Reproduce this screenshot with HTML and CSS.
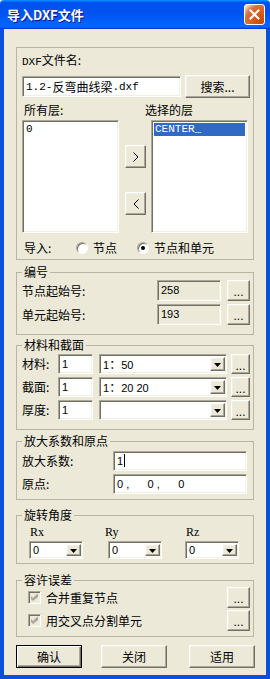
FILE: index.html
```html
<!DOCTYPE html>
<html lang="zh-CN">
<head>
    <meta charset="UTF-8">
    <meta name="viewport" content="width=device-width, initial-scale=1.0">
    <title>导入DXF文件</title>
    <link rel="stylesheet" href="styles.css">
</head>
<body>
    <div class="window">
        <div class="titlebar">
            <span class="title">导入DXF文件</span>
            <span class="close-btn">
                <svg width="11" height="11" viewBox="0 0 11 11"><path d="M1.5 1.5 L9.5 9.5 M9.5 1.5 L1.5 9.5" stroke="#fff" stroke-width="2" stroke-linecap="square"/></svg>
            </span>
        </div>

        <div class="client">
            <!-- file + layers -->
            <div class="file-box">
                <div class="label"><span class="mono">DXF</span>文件名:</div>
                <div class="file-row">
                    <div class="field file-input"><span class="mono">1.2-</span>反弯曲线梁<span class="mono">.dxf</span></div>
                    <button class="btn search-btn">搜索...</button>
                </div>
                <div class="layer-labels">
                    <span class="all-label">所有层:</span>
                    <span>选择的层</span>
                </div>
                <div class="layers">
                    <div class="field listbox"><div class="item mono">0</div></div>
                    <div class="move-btns">
                        <button class="btn arrow-btn"><svg width="6" height="10" viewBox="0 0 6 10"><path d="M0.5 0.5 L5 5 L0.5 9.5" fill="none" stroke="#000"/></svg></button>
                        <button class="btn arrow-btn"><svg width="6" height="10" viewBox="0 0 6 10"><path d="M5.5 0.5 L1 5 L5.5 9.5" fill="none" stroke="#000"/></svg></button>
                    </div>
                    <div class="field listbox"><div class="item selected mono">CENTER_</div></div>
                </div>
                <div class="import-row">
                    <span class="import-label">导入:</span>
                    <span class="radio"></span><span class="radio-text">节点</span>
                    <span class="radio checked second"></span><span class="radio-text">节点和单元</span>
                </div>
            </div>

            <fieldset class="group numbering">
                <legend>编号</legend>
                <div class="row">
                    <span class="row-label">节点起始号:</span>
                    <div class="field num-input num">258</div>
                    <button class="btn dots-btn">...</button>
                </div>
                <div class="row">
                    <span class="row-label">单元起始号:</span>
                    <div class="field num-input num">193</div>
                    <button class="btn dots-btn">...</button>
                </div>
            </fieldset>

            <fieldset class="group material">
                <legend>材料和截面</legend>
                <div class="row">
                    <span class="short-label">材料:</span>
                    <div class="field small-input num">1</div>
                    <div class="field combo">
                        <span class="combo-text"><span class="num">1</span>：<span class="num">50</span></span>
                        <span class="btn combo-arrow"><svg width="7" height="4" viewBox="0 0 7 4"><path d="M0 0 H7 L3.5 4 Z"/></svg></span>
                    </div>
                    <button class="btn dots-btn">...</button>
                </div>
                <div class="row">
                    <span class="short-label">截面:</span>
                    <div class="field small-input num">1</div>
                    <div class="field combo">
                        <span class="combo-text"><span class="num">1</span>：<span class="num">20 20</span></span>
                        <span class="btn combo-arrow"><svg width="7" height="4" viewBox="0 0 7 4"><path d="M0 0 H7 L3.5 4 Z"/></svg></span>
                    </div>
                    <button class="btn dots-btn">...</button>
                </div>
                <div class="row">
                    <span class="short-label">厚度:</span>
                    <div class="field small-input num">1</div>
                    <div class="field combo">
                        <span class="combo-text"></span>
                        <span class="btn combo-arrow"><svg width="7" height="4" viewBox="0 0 7 4"><path d="M0 0 H7 L3.5 4 Z"/></svg></span>
                    </div>
                    <button class="btn dots-btn">...</button>
                </div>
            </fieldset>

            <fieldset class="group scale">
                <legend>放大系数和原点</legend>
                <div class="row">
                    <span class="row-label">放大系数:</span>
                    <div class="field wide-input num">1<span class="caret"></span></div>
                </div>
                <div class="row">
                    <span class="row-label">原点:</span>
                    <div class="field wide-input num origin">0 ,      0 ,      0</div>
                </div>
            </fieldset>

            <fieldset class="group rotation">
                <legend>旋转角度</legend>
                <div class="rot-row">
                    <div class="rot-col">
                        <span class="rot-label">Rx</span>
                        <div class="field combo rot-combo">
                            <span class="combo-text num">0</span>
                            <span class="btn combo-arrow"><svg width="7" height="4" viewBox="0 0 7 4"><path d="M0 0 H7 L3.5 4 Z"/></svg></span>
                        </div>
                    </div>
                    <div class="rot-col">
                        <span class="rot-label ry">Ry</span>
                        <div class="field combo rot-combo">
                            <span class="combo-text num">0</span>
                            <span class="btn combo-arrow"><svg width="7" height="4" viewBox="0 0 7 4"><path d="M0 0 H7 L3.5 4 Z"/></svg></span>
                        </div>
                    </div>
                    <div class="rot-col">
                        <span class="rot-label">Rz</span>
                        <div class="field combo rot-combo">
                            <span class="combo-text num">0</span>
                            <span class="btn combo-arrow"><svg width="7" height="4" viewBox="0 0 7 4"><path d="M0 0 H7 L3.5 4 Z"/></svg></span>
                        </div>
                    </div>
                </div>
            </fieldset>

            <fieldset class="group tolerance">
                <legend>容许误差</legend>
                <div class="row">
                    <span class="field check"><svg width="7" height="7" viewBox="0 0 7 7"><path d="M0 2 L2 4 L6 0 L7 0 L7 3 L2 7 L0 5 Z" fill="#aca899"/></svg></span>
                    <span class="check-text">合并重复节点</span>
                    <button class="btn dots-btn">...</button>
                </div>
                <div class="row">
                    <span class="field check"><svg width="7" height="7" viewBox="0 0 7 7"><path d="M0 2 L2 4 L6 0 L7 0 L7 3 L2 7 L0 5 Z" fill="#aca899"/></svg></span>
                    <span class="check-text">用交叉点分割单元</span>
                    <button class="btn dots-btn">...</button>
                </div>
            </fieldset>

            <div class="dialog-btns">
                <button class="btn dialog-btn default">确认</button>
                <button class="btn dialog-btn close">关闭</button>
                <button class="btn dialog-btn apply">适用</button>
            </div>
        </div>
    </div>
</body>
</html>
```

FILE: styles.css
```css
* {
    box-sizing: border-box;
}
body {
    margin: 0;
    background: #fff;
    font-family: "Noto Sans CJK SC", "Liberation Sans", sans-serif;
    font-size: 12px;
    line-height: 14px;
    color: #000;
}
.window {
    width: 270px;
    height: 679px;
    display: flex;
    flex-direction: column;
}
.titlebar {
    flex: none;
    height: 29px;
    display: flex;
    align-items: center;
    justify-content: space-between;
    padding: 0 5px 0 7px;
    border-radius: 4px 4px 0 0;
    background: linear-gradient(180deg, #0997ff, #0053ee 8%, #0050ee 40%, #0066ff 88%, #0066ff 93%, #005bff 95%, #003dd7 96%, #003dd7);
}
.title {
    color: #fff;
    font-weight: bold;
    font-size: 13px;
    line-height: 16px;
    text-shadow: 1px 1px #0f1089;
}
.close-btn {
    width: 21px;
    height: 21px;
    border: 1px solid #fff;
    border-radius: 3px;
    display: flex;
    align-items: center;
    justify-content: center;
    background: radial-gradient(circle at 90% 90%, #cc4600 0, #dc6527 55%, #cd7546 70%, #ffccb2 90%, #fff 100%);
}
.client {
    flex: 1;
    display: flex;
    flex-direction: column;
    align-items: flex-start;
    background: #ece9d8;
    border: 4px solid #0b4fdd;
    border-top: 0;
    padding: 0 12px;
}

/* common controls */
.mono {
    font-family: "Liberation Mono", monospace;
    font-size: 11px;
}
.num {
    font-family: "Liberation Sans", Arial, sans-serif;
    font-size: 11px;
}
.field {
    background: #fff;
    border: 1px solid;
    border-color: #aca899 #fff #fff #aca899;
    box-shadow: inset 1px 1px #716f64, inset -1px -1px #f1efe2;
}
.btn {
    font: inherit;
    color: #000;
    padding: 0;
    flex: none;
    background: #ece9d8;
    border: 1px solid;
    border-color: #fff #716f64 #716f64 #fff;
    box-shadow: inset -1px -1px #aca899, inset 1px 1px #f1efe2;
    display: flex;
    align-items: center;
    justify-content: center;
}
.dots-btn {
    font-family: "Liberation Sans", Arial, sans-serif;
    padding-top: 3px;
}
.row {
    display: flex;
    align-items: center;
    height: 21px;
}
.row + .row {
    margin-top: 3px;
}
.row-label {
    flex: 1;
}

/* file group */
.file-box {
    width: 238px;
    margin-top: 18px;
    border: 1px solid #b8b5a5;
    padding: 5px 3px 4px 5px;
}
.file-row {
    display: flex;
    align-items: center;
    height: 23px;
    margin-top: 6px;
}
.file-input {
    width: 159px;
    height: 21px;
    padding-left: 3px;
    display: flex;
    align-items: center;
    white-space: nowrap;
}
.search-btn {
    width: 65px;
    height: 23px;
    margin-left: 4px;
}
.layer-labels {
    display: flex;
    margin-top: 5px;
}
.all-label {
    width: 123px;
    padding-left: 2px;
}
.layers {
    display: flex;
    height: 113px;
    margin-top: 3px;
}
.listbox {
    width: 97px;
    height: 113px;
    padding: 2px;
}
.item {
    height: 13px;
    line-height: 13px;
    padding-left: 1px;
}
.item.selected {
    background: #316ac5;
    color: #fff;
}
.move-btns {
    width: 21px;
    margin: 0 5px 0 6px;
    padding-top: 25px;
    display: flex;
    flex-direction: column;
    gap: 24px;
}
.arrow-btn {
    width: 21px;
    height: 23px;
}
.import-row {
    display: flex;
    align-items: center;
    margin-top: 8px;
}
.import-label {
    width: 54px;
    padding-left: 2px;
}
.radio {
    width: 12px;
    height: 12px;
    border-radius: 50%;
    border: 1px solid;
    border-color: #aca899 #fff #fff #aca899;
    box-shadow: inset 1px 1px #716f64;
    background: #fff;
    display: flex;
    align-items: center;
    justify-content: center;
}
.radio.checked::after {
    content: "";
    width: 4px;
    height: 4px;
    border-radius: 50%;
    background: #000;
}
.radio.second {
    margin-left: 20px;
}
.radio-text {
    margin-left: 5px;
}

/* group boxes */
.group {
    width: 238px;
    margin: 0;
    padding: 0 3px 0 5px;
    border: 1px solid #b8b5a5;
    min-inline-size: 0;
}
.group legend {
    padding: 0 2px;
    line-height: 14px;
}
.numbering {
    margin-top: 5px;
    padding-top: 1px;
    padding-bottom: 9px;
}
.num-input {
    width: 64px;
    height: 21px;
    background: #ece9d8;
    padding: 2px 0 0 3px;
}
.numbering .dots-btn {
    width: 23px;
    height: 21px;
    margin-left: 6px;
}
.material {
    margin-top: 3px;
    padding-top: 2px;
    padding-bottom: 9px;
}
.material .row,
.scale .row {
    height: 20px;
}
.short-label {
    width: 36px;
}
.small-input {
    width: 35px;
    height: 20px;
    padding: 2px 0 0 3px;
}
.combo {
    width: 128px;
    height: 20px;
    margin-left: 6px;
    padding: 2px 1px 2px 2px;
    display: flex;
    align-items: center;
}
.combo-text {
    flex: 1;
    padding-left: 1px;
    white-space: nowrap;
}
.combo-arrow {
    width: 15px;
    height: 100%;
    padding-top: 1px;
}
.material .dots-btn {
    width: 19px;
    height: 20px;
    margin-left: 4px;
}
.scale {
    margin-top: 4px;
    padding-top: 3px;
    padding-bottom: 5px;
}
.wide-input {
    width: 134px;
    height: 20px;
    margin-right: 3px;
    padding: 2px 0 0 3px;
    display: flex;
    align-items: flex-start;
    white-space: pre;
}
.caret {
    width: 1px;
    height: 13px;
    margin-left: 1px;
    background: #000;
}
.rotation {
    margin-top: 8px;
    padding-top: 3px;
    padding-bottom: 4px;
}
.rot-row {
    display: flex;
}
.rot-col {
    width: 54px;
    display: flex;
    flex-direction: column;
}
.rot-col:nth-child(1) {
    margin-left: 7px;
}
.rot-col:nth-child(2) {
    margin-left: 25px;
}
.rot-col:nth-child(3) {
    margin-left: 23px;
}
.rot-label {
    font-family: "Liberation Serif", serif;
    font-size: 12px;
    padding-left: 1px;
}
.rot-label.ry {
    margin-left: -4px;
}
.rot-combo {
    width: 54px;
    height: 18px;
    margin: 2px 0 0;
}
.tolerance {
    margin-top: 9px;
    padding-top: 0;
    padding-bottom: 5px;
}
.tolerance .row + .row {
    margin-top: 2px;
}
.check {
    width: 13px;
    height: 13px;
    margin-left: 6px;
    background: #ece9d8;
    display: flex;
    align-items: center;
    justify-content: center;
}
.check-text {
    flex: 1;
    margin-left: 5px;
}
.tolerance .dots-btn {
    width: 23px;
    height: 21px;
}

/* dialog buttons */
.dialog-btns {
    display: flex;
    margin-top: 8px;
}
.dialog-btn {
    width: 66px;
    height: 23px;
}
.dialog-btn.default {
    border: 1px solid #000;
    box-shadow: inset 1px 1px #fff, inset -1px -1px #716f64, inset -2px -2px #aca899;
}
.dialog-btn.close {
    margin-left: 19px;
}
.dialog-btn.apply {
    margin-left: 22px;
}
```
